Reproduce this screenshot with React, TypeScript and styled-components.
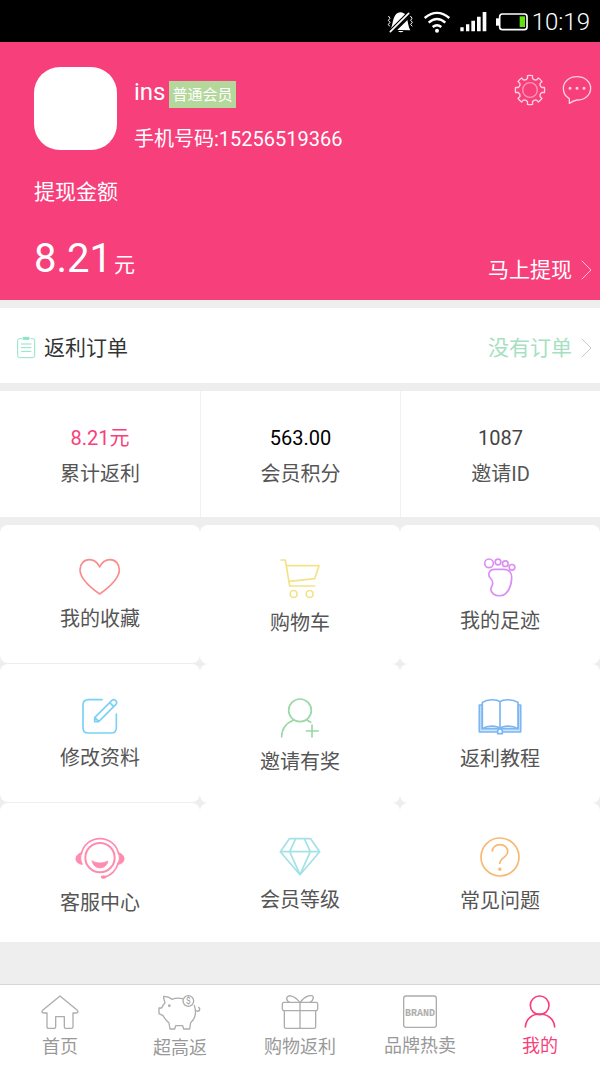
import React from "react";
import styled, { createGlobalStyle } from "styled-components";

const pink = "#f73f7c";
const gap = "#eeeeee";

const GlobalStyle = createGlobalStyle`
  * { box-sizing: border-box; }
  body {
    margin: 0;
    background: ${gap};
    font-family: Roboto, "Noto Sans CJK SC", sans-serif;
    font-size: 20px;
    line-height: 28px;
    color: #555;
  }
  button { font: inherit; color: inherit; background: none; border: 0; padding: 0; cursor: pointer; }
  a { color: inherit; text-decoration: none; }
  h2, p { margin: 0; font-weight: 400; }
  svg { display: block; flex: none; }
`;

const Page = styled.div`
  display: flex;
  flex-direction: column;
  min-height: 100vh;
`;

const StatusBar = styled.div`
  display: flex;
  align-items: center;
  justify-content: flex-end;
  height: 42px;
  padding: 2px 10px 0 0;
  background: #000;
  color: #fff;
`;

const StatusIcons = styled.div`
  display: flex;
  align-items: center;
  gap: 9px;
`;

const Clock = styled.time`
  margin-left: 4px;
  font-size: 24px;
  font-weight: 300;
`;

const Header = styled.header`
  padding: 25px 8px 16px 34px;
  background: ${pink};
  color: #fff;
`;

const Profile = styled.div`
  display: flex;
  align-items: flex-start;
  height: 83px;
`;

const Avatar = styled.div`
  width: 83px;
  height: 83px;
  margin-right: 17px;
  border-radius: 26px;
  background: #fff;
`;

const Info = styled.div`
  flex: 1;
  padding-top: 11px;
`;

const NameRow = styled.div`
  display: flex;
  align-items: flex-start;
  gap: 4px;
  height: 30px;
  margin-bottom: 17px;
`;

const Name = styled.span`
  font-size: 24px;
`;

const Badge = styled.span`
  align-self: flex-end;
  padding: 1px 3px 0;
  background: #b4d79b;
  font-size: 15px;
  line-height: 26px;
`;

const Actions = styled.div`
  display: flex;
  align-items: center;
  gap: 16px;
  padding-top: 7px;
`;

const Caption = styled.p`
  margin-top: 28px;
  font-size: 21px;
`;

const AmountRow = styled.div`
  display: flex;
  align-items: flex-start;
  justify-content: space-between;
  height: 48px;
  margin-top: 30px;
`;

const Amount = styled.p`
  font-size: 40px;
  line-height: 46px;
`;

const Unit = styled.span`
  margin-left: 2px;
  font-size: 21px;
`;

const MoreButton = styled.button<{ $color?: string }>`
  display: flex;
  align-items: center;
  align-self: flex-end;
  gap: 9px;
  font-size: 21px;
  color: ${(p) => p.$color || "inherit"};
`;

const Orders = styled.section`
  display: flex;
  align-items: center;
  justify-content: space-between;
  height: 75px;
  margin: 8px 0;
  padding: 4px 8px 0 16px;
  background: #fff;

  ${MoreButton} { align-self: center; }
`;

const OrdersTitle = styled.h2`
  display: flex;
  align-items: center;
  gap: 8px;
  font-size: 21px;
  color: #333;
`;

const Stats = styled.section`
  display: grid;
  grid-template-columns: repeat(3, 1fr);
  margin-bottom: 8px;
  background: #fff;
`;

const Stat = styled.div`
  height: 126px;
  padding-top: 33px;
  text-align: center;

  & + & { border-left: 1px solid #f1f1f1; }
`;

const StatValue = styled.p<{ $color: string }>`
  margin-bottom: 8px;
  color: ${(p) => p.$color};
`;

const Menu = styled.nav`
  display: grid;
  grid-template-columns: repeat(3, 1fr);
  grid-auto-rows: 139px;
`;

const MenuItem = styled.a`
  display: flex;
  flex-direction: column;
  align-items: center;
  gap: 10px;
  padding-top: 34px;
  border-radius: 8px;
  background: #fff;

  &:nth-child(-n + 3) { padding-top: 33px; }
  &:nth-child(3n + 1) { margin-bottom: 1px; }
  &:nth-child(n + 7) { margin-bottom: 0; border-radius: 8px 8px 0 0; }
`;

const TabBar = styled.nav`
  position: sticky;
  bottom: 0;
  display: grid;
  grid-template-columns: repeat(5, 1fr);
  height: 83px;
  margin-top: auto;
  border-top: 1px solid #d6d6d6;
  background: #fff;
`;

const Tab = styled.a<{ $active?: boolean }>`
  display: flex;
  flex-direction: column;
  align-items: center;
  gap: 4px;
  padding-top: 10px;
  font-size: 18px;
  color: ${(p) => (p.$active ? pink : "#999")};
`;

type IconProps = {
  w: number;
  h: number;
  box: string;
  color?: string;
  stroke?: number;
  children: React.ReactNode;
};

const Icon = ({ w, h, box, color = "#fff", stroke = 5, children }: IconProps) => (
  <svg
    width={w}
    height={h}
    viewBox={box}
    fill="none"
    stroke={color}
    strokeWidth={stroke}
    strokeLinejoin="round"
    strokeLinecap="round"
    aria-hidden="true"
  >
    {children}
  </svg>
);

const gearPath = () => {
  const point = (deg: number, r: number) => {
    const a = (deg * Math.PI) / 180;
    return `${(480 + r * Math.cos(a)).toFixed(1)} ${(270 + r * Math.sin(a)).toFixed(1)}`;
  };
  let d = "";
  for (let i = 0; i < 8; i++) {
    const a = i * 45;
    d += `${i ? "L" : "M"}${point(a - 12, 36)}L${point(a - 10, 44)}A44 44 0 0 1 ${point(a + 10, 44)}L${point(a + 12, 36)}`;
    d += `Q${point(a + 22.5, 31)} ${point(a + 33, 36)}`;
  }
  return d + "Z";
};

const Chevron = ({ color }: { color: string }) => (
  <Icon w={11} h={20} box="0 0 11 20" color={color} stroke={1}>
    <path d="M1 1 L10 10 L1 19" />
  </Icon>
);

const menu = [
  {
    label: "我的收藏",
    icon: (
      <Icon w={42} h={37} box="237 114 126 111" color="#f98d8d">
        <path d="M299 141C292 126 281 119 268 119C251 119 240 133 240 149C240 178 275 205 299 222C323 205 358 178 358 149C358 133 347 119 330 119C317 119 306 126 299 141Z" />
      </Icon>
    ),
  },
  {
    label: "购物车",
    icon: (
      <Icon w={40} h={41} box="841 114 120 123" color="#f3e28a">
        <path d="M844 120H857L870 198H945M860 137H958L945 176L869 184" />
        <circle cx="882" cy="222" r="10.5" />
        <circle cx="930" cy="222" r="10.5" />
      </Icon>
    ),
  },
  {
    label: "我的足迹",
    icon: (
      <Icon w={40} h={39} box="540 113 120 117" color="#da90f2">
        <circle cx="567" cy="129" r="13" />
        <circle cx="594" cy="125" r="8.5" />
        <circle cx="616" cy="130" r="8.5" />
        <circle cx="636" cy="141" r="8.5" />
        <path d="M584 147H612C627 147 636 158 635 174C634 195 626 212 616 221C607 228 590 228 580 221C569 212 572 202 577 194C580 185 578 180 571 173C563 164 565 148 584 147Z" />
      </Icon>
    ),
  },
  {
    label: "修改资料",
    icon: (
      <Icon w={36} h={36} box="246 113 108 108" color="#7bd1f5">
        <path d="M306 118H265Q249 118 249 134V202Q249 218 265 218H333Q349 218 349 202V161" />
        <path d="M284 184V172L335 121A8 8 0 0 1 347 133L296 184ZM285 172L296 183M329 127L341 139" />
      </Icon>
    ),
  },
  {
    label: "邀请有奖",
    icon: (
      <Icon w={40} h={40} box="841 115 120 120" color="#9ad8a6">
        <circle cx="901" cy="152" r="34" />
        <path d="M846 232C846 208 860 190 882 181M921 181L933 188M937 196V232M920 214H956" />
      </Icon>
    ),
  },
  {
    label: "返利教程",
    icon: (
      <Icon w={44} h={37} box="534 114 132 111" color="#7bb6f2">
        <path d="M547 135H538V216H662V135H654V206H547Z" fill="#cfe4fb" />
        <path d="M600 125C590 117 562 117 547 127V206C562 196 590 196 600 206C610 196 638 196 654 206V127C638 117 610 117 600 125V206" fill="#fff" />
        <path d="M593 221V211L600 205L607 211V221Z" fill="#fff" />
      </Icon>
    ),
  },
  {
    label: "客服中心",
    icon: (
      <Icon w={50} h={42} box="225 109 150 126" color="#fe8cb0">
        <circle cx="300" cy="171" r="44" strokeWidth={6} />
        <path d="M244 160A57 57 0 0 1 356 160M355 186C349 209 332 226 312 229" />
        <path d="M244 156C222 162 222 189 247 191C241 180 241 168 244 156ZM356 156C378 162 378 189 353 191C359 180 359 168 356 156Z" fill="#fe8cb0" strokeWidth={3} />
        <path d="M276 181Q300 193 324 181Q320 201 300 202Q280 201 276 181Z" fill="#fe8cb0" strokeWidth={2} />
        <ellipse cx="311" cy="229" rx="6" ry="3" fill="#fe8cb0" />
      </Icon>
    ),
  },
  {
    label: "会员等级",
    icon: (
      <Icon w={42} h={39} box="837 109 126 117" color="#a2e2e8">
        <path d="M868 114H932L959 153L900 222L841 153ZM841 153H959M887 114L869 153L900 222L931 153L913 114" />
      </Icon>
    ),
  },
  {
    label: "常见问题",
    icon: (
      <Icon w={40} h={40} box="541 111 120 120" color="#f6b972">
        <circle cx="601" cy="171" r="57" />
        <path d="M578 155C577 142 588 134 601 134C615 134 624 143 624 155C624 171 600 174 600 192" strokeLinecap="butt" />
        <path d="M596 203H605V212H596Z" fill="#f6b972" stroke="none" />
      </Icon>
    ),
  },
];

const tabGrey = "#adadad";

const tabs = [
  {
    label: "首页",
    icon: (
      <Icon w={38} h={34} box="123 76 114 102" color={tabGrey} stroke={4}>
        <path d="M180 79L232 122Q236 129 229 130H219V171Q219 176 214 176H197Q193 176 193 171V141H167V171Q167 176 163 176H147Q141 176 141 171V130H131Q123 129 128 122Z" />
      </Icon>
    ),
  },
  {
    label: "超高返",
    icon: (
      <Icon w={44} h={35} box="474 75 132 105" color={tabGrey} stroke={4}>
        <path d="M547 86C538 84 526 84 516 88C509 82 501 79 491 79C490 85 493 91 495 98C489 104 487 109 485 114H477V131L489 137C494 147 500 152 507 159L510 177H524L527 167H548L551 177H569L572 158C586 146 590 128 583 106" />
        <path d="M589 122C596 128 603 118 596 112" />
        <circle cx="565" cy="93" r="16" />
        <circle cx="508" cy="107" r="4" fill={tabGrey} stroke="none" />
        <text x="565" y="102" textAnchor="middle" fontSize="25" fill="#999" stroke="none">$</text>
      </Icon>
    ),
  },
  {
    label: "购物返利",
    icon: (
      <Icon w={38} h={34} box="843 75 114 102" color={tabGrey} stroke={4}>
        <rect x="847" y="97" width="106" height="25" rx="5" />
        <path d="M853 122V170Q853 175 858 175H942Q947 175 947 170V122M900 97V175" />
        <path d="M899 97C885 77 862 71 860 85Q860 93 868 97M901 97C915 77 938 71 940 82Q940 92 930 97" />
      </Icon>
    ),
  },
  {
    label: "品牌热卖",
    icon: (
      <Icon w={34} h={33} box="309 76 102 99" color={tabGrey} stroke={4}>
        <rect x="311" y="79" width="98" height="94" rx="7" />
        <text x="360" y="138" textAnchor="middle" fontFamily="'Liberation Mono', monospace" fontWeight="700" fontSize="30" fill={tabGrey} stroke="none">BRAND</text>
      </Icon>
    ),
  },
  {
    label: "我的",
    active: true,
    icon: (
      <Icon w={32} h={33} box="672 76 96 99" color={pink}>
        <circle cx="719" cy="107" r="28" />
        <path d="M676 172C678 147 697 133 719 133C742 133 762 147 764 172" />
      </Icon>
    ),
  },
];

export default function App() {
  return (
    <Page>
      <GlobalStyle />
      <StatusBar>
        <StatusIcons>
          <Icon w={28} h={23} box="40 30 84 69" stroke={3}>
            <path d="M52 86C64 76 56 36 84 34C108 36 102 66 113 88ZM76 90Q84 98 93 90Z" fill="#fff" stroke="none" />
            <path d="M56 100L116 41" stroke="#000" strokeWidth={6} />
            <path d="M53 92L108 37" stroke="#000" strokeWidth={12} />
            <path d="M53 92L108 37" strokeWidth={5} />
            <path d="M48 46L52 52L47 58L52 64L47 70L50 75M114 46L118 52L114 58L119 64L114 70L118 75" />
          </Icon>
          <Icon w={28} h={22} box="163 30 84 66" stroke={7}>
            <path d="M168 51Q205 20 242 51M180 65Q205 43 230 65M192 78Q205 67 218 78" strokeLinecap="butt" />
            <circle cx="205" cy="89" r="6" fill="#fff" stroke="none" />
          </Icon>
          <Icon w={27} h={20} box="269 38 81 60">
            <path d="M270 84h10v12h-10zM287 75h10v21h-10zM303 64h11v32h-11zM320 52h11v44h-11zM337 38h11v58h-11z" fill="#fff" stroke="none" />
          </Icon>
          <Icon w={32} h={18} box="378 41 96 54">
            <rect x="389" y="44" width="82" height="47" rx="8" />
            <path d="M378 57H389V79H378Z" fill="#fff" stroke="none" />
            <path d="M449 51H465V83H449Z" fill="#62e010" stroke="none" />
          </Icon>
        </StatusIcons>
        <Clock>10:19</Clock>
      </StatusBar>

      <Header>
        <Profile>
          <Avatar />
          <Info>
            <NameRow>
              <Name>ins</Name>
              <Badge>普通会员</Badge>
            </NameRow>
            <p>手机号码:15256519366</p>
          </Info>
          <Actions>
            <button type="button" aria-label="设置">
              <Icon w={32} h={32} box="432 222 96 96" color="#ffd0df" stroke={4}>
                <path d={gearPath()} />
                <circle cx="480" cy="270" r="22" opacity="0.6" />
              </Icon>
            </button>
            <button type="button" aria-label="消息">
              <Icon w={30} h={30} box="576 224 90 90" color="#ffd0df" stroke={4}>
                <path d="M598 309V295C585 288 580 276 580 264C580 244 598 229 621 229C644 229 662 244 662 264C662 284 644 299 621 299Q609 302 598 309Z" />
                <path d="M600 264h0.1M621 264h0.1M642 264h0.1" strokeWidth={9} />
              </Icon>
            </button>
          </Actions>
        </Profile>
        <Caption>提现金额</Caption>
        <AmountRow>
          <Amount>
            8.21<Unit>元</Unit>
          </Amount>
          <MoreButton type="button">
            马上提现
            <Chevron color="#ffc4d8" />
          </MoreButton>
        </AmountRow>
      </Header>

      <Orders>
        <OrdersTitle>
          <Icon w={20} h={24} box="48 102 60 72" color="#8ee3c6" stroke={3}>
            <path d="M64 110H59Q53 110 53 116V161Q53 167 59 167H98Q104 167 104 161V116Q104 110 98 110H93M64 126H93M64 137H93M64 148H93" />
            <path d="M70 106H87V112H70Z" fill="#8ee3c6" />
          </Icon>
          返利订单
        </OrdersTitle>
        <MoreButton type="button" $color="#a6dfc1">
          没有订单
          <Chevron color="#c8c8c8" />
        </MoreButton>
      </Orders>

      <Stats>
        <Stat>
          <StatValue $color={pink}>8.21元</StatValue>
          <p>累计返利</p>
        </Stat>
        <Stat>
          <StatValue $color="#000">563.00</StatValue>
          <p>会员积分</p>
        </Stat>
        <Stat>
          <StatValue $color="#444">1087</StatValue>
          <p>邀请ID</p>
        </Stat>
      </Stats>

      <Menu>
        {menu.map((item) => (
          <MenuItem key={item.label} href="#">
            {item.icon}
            {item.label}
          </MenuItem>
        ))}
      </Menu>

      <TabBar>
        {tabs.map((tab) => (
          <Tab key={tab.label} href="#" $active={tab.active}>
            {tab.icon}
            {tab.label}
          </Tab>
        ))}
      </TabBar>
    </Page>
  );
}
